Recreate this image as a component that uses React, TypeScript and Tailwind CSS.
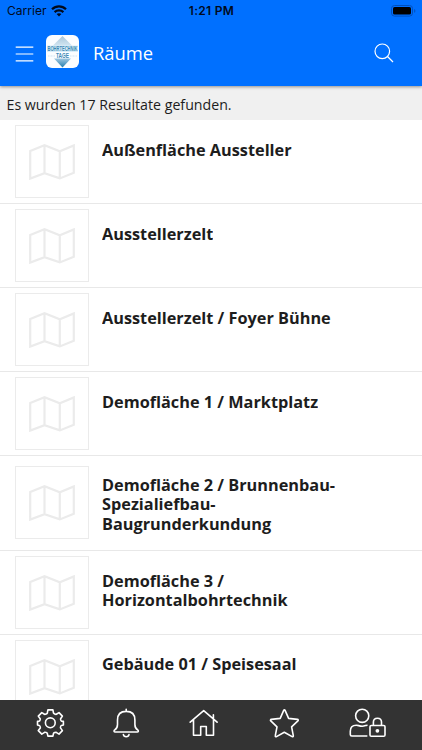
import type { ReactNode } from 'react'

const rooms = [
  { lines: ['Außenfläche Aussteller'], row: 'h-[84px] pt-[5px]', text: 'mt-4' },
  { lines: ['Ausstellerzelt'], row: 'h-[84px] pt-[5px]', text: 'mt-4' },
  { lines: ['Ausstellerzelt / Foyer Bühne'], row: 'h-[84px] pt-[5px]', text: 'mt-4' },
  { lines: ['Demofläche 1 / Marktplatz'], row: 'h-[84px] pt-[5px]', text: 'mt-4' },
  {
    lines: ['Demofläche 2 / Brunnenbau-', 'Spezialiefbau-', 'Baugrunderkundung'],
    row: 'h-[95px] pt-[10px]',
    text: 'mt-[9.5px]',
  },
  { lines: ['Demofläche 3 /', 'Horizontalbohrtechnik'], row: 'h-[84px] pt-[5px]', text: 'mt-[15.5px]' },
  { lines: ['Gebäude 01 / Speisesaal'], row: 'h-[84px] pt-[5px]', text: 'mt-[15px]' },
]

function WifiIcon() {
  return (
    <svg width="16" height="12" viewBox="0 0 16 12" fill="none" stroke="#000a1c" strokeWidth="2.2">
      <path d="M1 4.3C5 .4 11 .4 15 4.3" />
      <path d="M3.6 7.1c2.5-2.4 6.3-2.4 8.8 0" />
      <path d="M8 11.5 5.6 9.1c1.4-1.2 3.4-1.2 4.8 0z" fill="#000a1c" stroke="none" />
    </svg>
  )
}

function Battery() {
  return (
    <svg width="25" height="12" viewBox="0 0 25 12" fill="none">
      <rect x=".5" y=".5" width="21" height="10.6" rx="3" stroke="#0050bd" />
      <rect x="2" y="2" width="18" height="7.6" rx="1.6" fill="#000" />
      <path d="M23.2 4v3.8c.8-.4 1.2-1 1.2-1.9s-.4-1.5-1.2-1.9z" fill="#0050bd" />
    </svg>
  )
}

function AppLogo() {
  return (
    <svg width="33" height="33" viewBox="0 0 33 33" className="rounded-[6px] bg-[#fbfdff]">
      <defs>
        <linearGradient id="top" x1="0" y1="0" x2="0" y2="1">
          <stop offset="0" stopColor="#a9c6da" />
          <stop offset="1" stopColor="#d5e8f3" />
        </linearGradient>
        <linearGradient id="tip" x1="0" y1="0" x2="0" y2="1">
          <stop offset="0" stopColor="#9fc6df" />
          <stop offset="1" stopColor="#257fae" />
        </linearGradient>
      </defs>
      <path d="M16.5 1 27 11.5H6z" fill="url(#top)" />
      <rect x="1" y="10.5" width="31" height="6.5" fill="#d9edf9" />
      <path d="M8 23.5h17l-8.5 9z" fill="url(#tip)" />
      <g
        fill="#3e89b5"
        textAnchor="middle"
        className="font-['Liberation_Sans',sans-serif] text-[7px] font-bold"
      >
        <text x="16.5" y="16" textLength="30" lengthAdjust="spacingAndGlyphs">BOHRTECHNIK</text>
        <text x="16.5" y="23" textLength="13" lengthAdjust="spacingAndGlyphs">TAGE</text>
      </g>
      <path d="M2 21h7M24 21h7" stroke="#bfd9e9" strokeWidth=".7" strokeDasharray="1 .5" />
    </svg>
  )
}

function MapIcon() {
  return (
    <svg width="46" height="36" viewBox="0 0 46 36" fill="none" stroke="#ebebeb" strokeWidth="2.2">
      <path d="M1.2 7 15.5 1.2l15.3 6L44.8 1.4v27.4l-14 5.6-15.3-5.2L1.2 34.6zM15.5 1.2v28M30.8 7.2v27.2" />
    </svg>
  )
}

function NavIcon({ width, className, children }: { width: number; className?: string; children: ReactNode }) {
  return (
    <svg
      width={width}
      height="30"
      viewBox={`0 0 ${width} 30`}
      fill="none"
      stroke="#fff"
      strokeWidth="1.6"
      strokeLinecap="round"
      strokeLinejoin="round"
      className={className}
    >
      {children}
    </svg>
  )
}

function TabBar() {
  return (
    <nav className="flex h-[50px] shrink-0 items-start bg-[#333] pt-2 pl-[35px]">
      <NavIcon width={30}>
        <path d="M12.9 1.9h5l.6 3.2c.2.6 2.2 1.5 2.8 1.2l2.7-1.7 3.4 3.5-1.8 2.7c-.2.6.3 2 .9 2.3l1.9.3v3.5l-1.9.5c-.6.3-1.2 1.9-1 2.5l1.9 2.7-3.4 3.5-2.8-1.8c-.6-.2-2.4.5-2.7 1.1l-.6 2.7h-5l-.6-2.7c-.3-.6-2-1.3-2.7-1.1l-2.8 1.8-3.5-3.5 2-2.7c.2-.6-.5-2.2-1.1-2.5l-1.7-.5v-3.5l1.7-.3c.6-.3 1.2-1.7 1-2.3L3.3 8.1l3.5-3.5 2.7 1.7c.7.3 2.5-.6 2.8-1.2z" />
        <circle cx="15.3" cy="14.8" r="4.9" />
      </NavIcon>
      <NavIcon width={30} className="ml-[46px]">
        <path d="M15.2 1.3v1.9M6.5 16.5V12C6.5 6.5 9.5 3.4 15.2 3.4S23.9 6.5 23.9 12v4.5c0 3 .9 4.4 3 5.6.8.9.5 1.9-.7 1.9h-22c-1.2 0-1.5-1-.7-1.9 2.1-1.2 3-2.6 3-5.6zM12.4 26.6c.5 2.8 5.1 2.8 5.6 0" />
      </NavIcon>
      <NavIcon width={30} className="ml-[47px]">
        <path d="M2.2 14.2 15.7 2.7l13.4 11.5M5.5 11.8v15.5h7.2v-8.8h5.6v8.8h7.2V11.5M25.4 10V6.8" />
      </NavIcon>
      <NavIcon width={30} className="ml-[51px]">
        <path d="M14.7 2.4c.4-.8 1-.8 1.4 0l3.5 8 8.8 1c.9.1 1.1.9.5 1.5l-6.3 6 1.7 8.8c.1.8-.5 1.3-1.2.9l-7.8-4.3-7.8 4.3c-.7.4-1.4-.1-1.2-.9L8 18.9l-6.2-6c-.6-.6-.3-1.4.5-1.5l8.9-1z" />
      </NavIcon>
      <NavIcon width={38} className="ml-[50px]">
        <circle cx="13.2" cy="7.8" r="6.6" />
        <path d="M17.8 28h-15c-1 0-1.5-.5-1.5-1.5v-3.3c0-3.8 2.3-6 6-6 2 0 3 1 5.9 1 2.3 0 3.4-.8 4.8-1" />
        <rect x="21" y="17.5" width="15" height="10.7" rx="1.3" />
        <path d="M24.4 17.3v-3.2c0-5.2 8.1-5.2 8.1 0v3.2" />
        <circle cx="28.4" cy="22.8" r="1.1" fill="#fff" />
      </NavIcon>
    </nav>
  )
}

export default function App() {
  return (
    <div className="flex h-[750px] w-[422px] flex-col overflow-hidden bg-white font-['Open_Sans',sans-serif] text-[#1d1d1d]">
      <header className="relative z-10 h-[86px] shrink-0 bg-[#0070ff] shadow-[0_1px_3px_rgba(0,0,0,0.4)]">
        <div className="grid h-[22px] grid-cols-3 items-center pr-[6px] pl-[7px] font-[Inter,sans-serif] text-[12px] text-[#000a1c]">
          <div className="flex items-center gap-1 tracking-[0.05px]">
            Carrier
            <WifiIcon />
          </div>
          <div className="text-center font-semibold tracking-[0.3px]">1:21 PM</div>
          <div className="flex justify-end">
            <Battery />
          </div>
        </div>
        <div className="flex items-start pt-[13px] pr-7 pl-[15px]">
          <svg width="19" height="16" viewBox="0 0 19 16" stroke="#fff" strokeWidth="1.2" className="mt-[11px]">
            <path d="M.7 1.2h17.6M.7 8h17.6M.7 14.8h17.6" />
          </svg>
          <div className="ml-3">
            <AppLogo />
          </div>
          <h1 className="ml-[14px] text-[18.4px] leading-[35px] text-white">Räume</h1>
          <svg
            width="20"
            height="20"
            viewBox="0 0 20 20"
            fill="none"
            stroke="#fff"
            strokeWidth="1.2"
            className="mt-2 ml-auto"
          >
            <circle cx="8.3" cy="8.3" r="7.3" />
            <path d="m13.5 13.5 5.5 5.5" />
          </svg>
        </div>
      </header>

      <p className="h-[34px] shrink-0 bg-[#f0f0f0] pt-[2px] pl-[6.5px] text-[14.2px] leading-[34px]">
        Es wurden 17 Resultate gefunden.
      </p>

      <ul className="min-h-0 flex-1 overflow-hidden">
        {rooms.map((room) => (
          <li key={room.lines[0]} className={`flex items-start border-b border-[#e8e8e8] pl-[15px] ${room.row}`}>
            <div className="flex h-[73px] w-[74px] shrink-0 items-center justify-center border border-[#ebebeb]">
              <MapIcon />
            </div>
            <h2 className={`ml-[13px] overflow-hidden text-[16.3px] leading-[19.5px] font-bold ${room.text}`}>
              {room.lines.map((line) => (
                <span key={line} className="block whitespace-nowrap">
                  {line}
                </span>
              ))}
            </h2>
          </li>
        ))}
      </ul>

      <TabBar />
    </div>
  )
}
